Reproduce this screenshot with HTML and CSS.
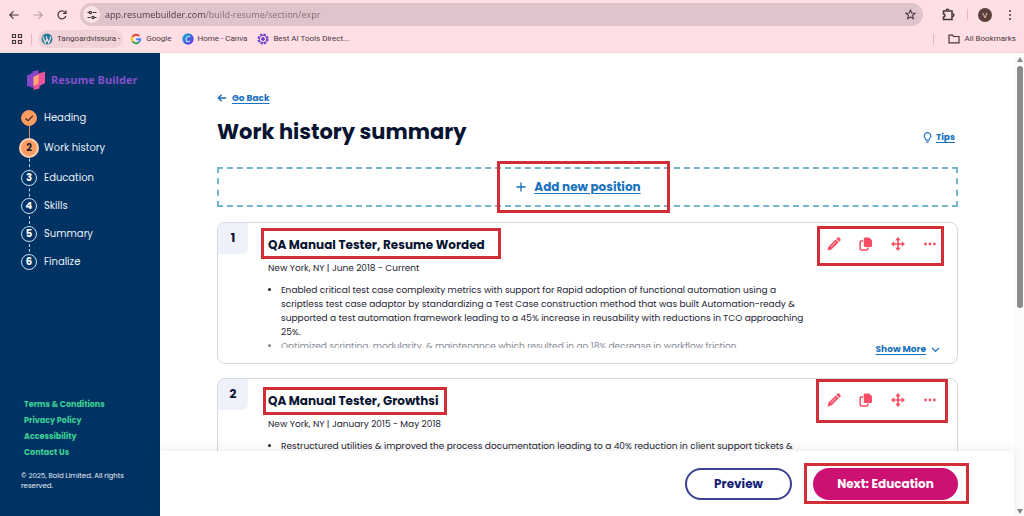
FILE: index.html
```html
<!DOCTYPE html>
<html lang="en">
<head>
<meta charset="utf-8">
<meta name="viewport" content="width=device-width, initial-scale=1">
<title>Work history summary</title>
<link rel="stylesheet" href="styles.css">
</head>
<body>
<svg class="defs" aria-hidden="true">
  <symbol id="pencil" viewBox="0 0 14 14"><path d="M9.3 1.8 10.5.6q.8-.7 1.6 0l1.3 1.3q.7.8 0 1.6l-1.2 1.2zM8.7 2.400l2.900 2.900-7.200 7.200L.5 13.500l1-3.900z" fill="currentColor"/><path d="M3.700 10 8.700 5" stroke="#fff" stroke-width=".7"/></symbol>
  <symbol id="copy" viewBox="0 0 14 14"><path d="M6 .5h4.200L13 3.200v5.600q0 1.200-1.200 1.200H6q-1.200 0-1.200-1.200V1.700Q4.800.5 6 .5z" fill="currentColor"/><path d="M4.200 4H2.200q-1 0-1 1v7q0 1 1 1h5.600q1 0 1-1v-1.500" fill="none" stroke="currentColor" stroke-width="1.500"/></symbol>
  <symbol id="move" viewBox="0 0 14 14"><path d="M7 1.500v11M1.500 7h11" stroke="currentColor" stroke-width="1.700"/><path d="M7 0l2.700 3.200H4.300zM7 14l2.700-3.200H4.300zM0 7l3.200-2.700v5.400zM14 7l-3.200-2.700v5.400z" fill="currentColor"/></symbol>
  <symbol id="dots" viewBox="0 0 14 14"><circle cx="2.600" cy="7" r="1.400" fill="currentColor"/><circle cx="7" cy="7" r="1.400" fill="currentColor"/><circle cx="11.400" cy="7" r="1.400" fill="currentColor"/></symbol>
</svg>

<header class="browser">
  <div class="toolbar">
    <button class="tool" aria-label="Back"><svg viewBox="0 0 12 12"><path d="M10.500 6H2M5.500 2.300 1.800 6l3.700 3.700" class="line"/></svg></button>
    <button class="tool tool-off" aria-label="Forward"><svg viewBox="0 0 12 12"><path d="M1.500 6H10M6.500 2.300 10.200 6 6.500 9.700" class="line"/></svg></button>
    <button class="tool" aria-label="Reload"><svg viewBox="0 0 12 12"><path d="M9.800 7A4 4 0 1 1 9 3.300l1 1M10 1.500v3H7" class="line"/></svg></button>
    <div class="address">
      <button class="site" aria-label="Site information"><svg viewBox="0 0 12 12"><path d="M1.500 3.500h2M7.500 8.500h3M6.500 3.500h4M1.500 8.500h3" class="line"/><circle cx="4.300" cy="3.500" r="1.200" class="line"/><circle cx="7" cy="8.500" r="1.200" class="line"/></svg></button>
      <input class="url" type="text" aria-label="Address" value="app.resumebuilder.com/build-resume/section/expr">
      <button class="star" aria-label="Bookmark this page"><svg viewBox="0 0 12 12"><path d="M6 1.200l1.400 3.200 3.500.3-2.600 2.300.8 3.500L6 8.700l-3.100 1.800.8-3.500L1.100 4.700l3.500-.3z" class="line"/></svg></button>
    </div>
    <button class="tool ext" aria-label="Extensions"><svg viewBox="0 0 13 13"><path d="M1.500 3h3q-.5-1.800 1-1.800t1 1.800H10v3q1.800-.5 1.800 1T10 8v3.500H1.500V9q1.500 0 1.500-1.500T1.500 6z" class="line heavy"/></svg></button>
    <span class="bar"></span>
    <button class="avatar" aria-label="Profile V">V</button>
    <button class="tool kebab" aria-label="Menu"><svg viewBox="0 0 12 12"><circle cx="6" cy="2" r="1"/><circle cx="6" cy="6" r="1"/><circle cx="6" cy="10" r="1"/></svg></button>
  </div>
  <nav class="bookmarks" aria-label="Bookmarks">
    <button class="apps" aria-label="Apps"><svg viewBox="0 0 12 12"><path d="M1.500 1.500h3v3h-3zM7.500 1.500h3v3h-3zM1.500 7.500h3v3h-3zM7.500 7.500h3v3h-3z" class="line"/></svg></button>
    <span class="bar"></span>
    <a href="#" class="mark mark-on"><svg viewBox="0 0 12 12"><circle cx="6" cy="6" r="5.500" fill="#2a7b9b"/><path d="M1.800 3.500 4.300 10 6 5.500 7.700 10 10 3.500M5 3.500 6 5.500" fill="none" stroke="#f5e6ea" stroke-width="1.100"/></svg>Tangoardvissura -</a>
    <a href="#" class="mark"><svg viewBox="0 0 12 12" fill="none" stroke-width="2"><path d="M9.300 3.200A4.200 4.200 0 0 0 2.500 3.700" stroke="#ea4335"/><path d="M2.500 3.700a4.200 4.200 0 0 0 0 4.600" stroke="#fbbc05"/><path d="M2.500 8.300a4.200 4.200 0 0 0 6.300 1" stroke="#34a853"/><path d="M8.800 9.300A4.200 4.200 0 0 0 10.200 6.200H6.200" stroke="#4285f4"/></svg>Google</a>
    <a href="#" class="mark"><svg viewBox="0 0 12 12"><defs><linearGradient id="cv" x2="1" y2="1"><stop stop-color="#18bfd0"/><stop offset=".55" stop-color="#3a62e0"/><stop offset="1" stop-color="#7d2ae8"/></linearGradient></defs><circle cx="6" cy="6" r="5.700" fill="url(#cv)"/><path d="M8 4.200Q7.500 3 6.200 3.300 4 4 4 6.500t2 2.300Q7.300 8.800 8.200 7.500" fill="none" stroke="#fff" stroke-width="1"/></svg>Home - Canva</a>
    <a href="#" class="mark"><svg viewBox="0 0 12 12" fill="none" stroke="#6a3fd0"><circle cx="6" cy="6" r="4.700" stroke-width="1.800" stroke-dasharray="2.300 1.390"/><circle cx="6" cy="6" r="3.800"/><circle cx="6" cy="6" r="1.400" fill="#6a3fd0"/></svg>Best AI Tools Direct...</a>
    <span class="bar bar-end"></span>
    <a href="#" class="mark mark-all"><svg viewBox="0 0 12 12"><path d="M1 2.200h3.500l1.200 1.300H11v6.300H1z" class="line"/></svg>All Bookmarks</a>
  </nav>
</header>

<div class="app">
  <aside class="sidebar">
    <a href="#" class="brand">
      <svg viewBox="0 0 20 22"><path d="M1 6.500 6.500 4V2.500L12.500 1v13.500L7.500 17v2L1 17z" fill="#8a46c8"/><path d="M7.500 8l5-2.400V4.500L19 2.500V14l-5.500 3v2.500L7.500 21z" fill="#f0529c"/><path d="M7.500 8l5-2.400v9l-5 2.400z" fill="#ffa873"/></svg>
      Resume Builder
    </a>
    <ol class="steps">
      <li class="step done"><span class="dot"><svg viewBox="0 0 12 12"><path d="M2.500 6.500 5 8.700 9.800 3.800" fill="none" stroke="#3a2a2a" stroke-width="1.200"/></svg></span><a href="#">Heading</a></li>
      <li class="step current"><span class="dot">2</span><a href="#">Work history</a></li>
      <li class="step"><span class="dot">3</span><a href="#">Education</a></li>
      <li class="step"><span class="dot">4</span><a href="#">Skills</a></li>
      <li class="step"><span class="dot">5</span><a href="#">Summary</a></li>
      <li class="step"><span class="dot">6</span><a href="#">Finalize</a></li>
    </ol>
    <nav class="legal" aria-label="Legal">
      <a href="#">Terms &amp; Conditions</a>
      <a href="#">Privacy Policy</a>
      <a href="#">Accessibility</a>
      <a href="#">Contact Us</a>
    </nav>
    <p class="copyright">© 2025, Bold Limited. All rights reserved.</p>
  </aside>

  <div class="page">
    <main class="content">
      <a href="#" class="back"><svg viewBox="0 0 12 12"><path d="M11 6H1.500M5.500 2 1.500 6l4 4" class="line heavy"/></svg><span>Go Back</span></a>
      <div class="heading">
        <h1>Work history summary</h1>
        <a href="#" class="tips"><svg viewBox="0 0 12 12"><path d="M4.500 9Q4.500 7.800 3.400 6.700a3.500 3.500 0 1 1 5.200 0Q7.500 7.800 7.500 9zM4.700 11h2.600" class="line"/></svg><span>Tips</span></a>
      </div>
      <div class="add">
        <button class="add-button"><svg viewBox="0 0 12 12"><path d="M6 .5v11M.5 6h11" class="line heavy"/></svg><span>Add new position</span><i class="callout callout-add"></i></button>
      </div>

      <article class="card">
        <span class="number">1</span>
        <div class="body">
          <h2>QA Manual Tester, Resume Worded<i class="callout callout-title"></i></h2>
          <p class="meta">New York, NY | June 2018 - Current</p>
          <ul class="duties">
            <li>Enabled critical test case complexity metrics with support for Rapid adoption of functional automation using a<br>scriptless test case adaptor by standardizing a Test Case construction method that was built Automation-ready &amp;<br>supported a test automation framework leading to a 45% increase in reusability with reductions in TCO approaching<br>25%.</li>
            <li class="faded">Optimized scripting, modularity, &amp; maintenance which resulted in an 18% decrease in workflow friction.</li>
          </ul>
        </div>
        <div class="side">
          <div class="actions">
            <button aria-label="Edit"><svg><use href="#pencil"/></svg></button>
            <button aria-label="Duplicate"><svg><use href="#copy"/></svg></button>
            <button aria-label="Move"><svg><use href="#move"/></svg></button>
            <button aria-label="More"><svg><use href="#dots"/></svg></button>
            <i class="callout callout-actions"></i>
          </div>
          <button class="more"><span>Show More</span><svg viewBox="0 0 12 12"><path d="M1.500 4 6 8.500 10.500 4" class="line heavy"/></svg></button>
        </div>
      </article>

      <article class="card">
        <span class="number">2</span>
        <div class="body">
          <h2>QA Manual Tester, Growthsi<i class="callout callout-title-short"></i></h2>
          <p class="meta">New York, NY | January 2015 - May 2018</p>
          <ul class="duties">
            <li>Restructured utilities &amp; improved the process documentation leading to a 40% reduction in client support tickets &amp;</li>
          </ul>
        </div>
        <div class="side">
          <div class="actions">
            <button aria-label="Edit"><svg><use href="#pencil"/></svg></button>
            <button aria-label="Duplicate"><svg><use href="#copy"/></svg></button>
            <button aria-label="Move"><svg><use href="#move"/></svg></button>
            <button aria-label="More"><svg><use href="#dots"/></svg></button>
            <i class="callout callout-actions-wide"></i>
          </div>
        </div>
      </article>
    </main>
    <footer class="footer">
      <button class="pill preview">Preview</button>
      <button class="pill next">Next: Education<i class="callout callout-next"></i></button>
    </footer>
  </div>

  <div class="scroll" aria-hidden="true"><span class="up"></span><span class="thumb"></span><span class="down"></span></div>
</div>
</body>
</html>
```
FILE: styles.css
```css
* { box-sizing: border-box; }
body {
  margin: 0;
  height: 100vh;
  display: flex;
  flex-direction: column;
  overflow: hidden;
  background: #fff;
  color: #1d2333;
  font: 10px/14px Poppins, Inter, sans-serif;
}
h1, h2, p, ol, ul { margin: 0; padding: 0; }
button, input { font: inherit; color: inherit; background: none; border: 0; padding: 0; }
button { cursor: pointer; }
a { color: inherit; text-decoration: none; }
svg { display: block; flex: none; width: 12px; height: 12px; }
.defs { position: absolute; width: 0; height: 0; }
.line { fill: none; stroke: currentColor; stroke-width: 1.2; }
.heavy { stroke-width: 1.6; }

/* Browser bars */
.browser {
  flex: none;
  padding: 3px 8px 0;
  background: #ffdee5;
  border-bottom: 1px solid #f0d3da;
  color: #46393d;
  font: 9px/12px "Open Sans", sans-serif;
}
.toolbar { display: flex; align-items: center; height: 23px; gap: 12px; }
.tool-off { color: #bd9fa6; }
.address {
  flex: 1;
  display: flex;
  align-items: center;
  height: 23px;
  margin-right: 7px;
  padding: 0 3px;
  border-radius: 12px;
  background: #e0c4cb;
}
.site {
  display: grid;
  place-items: center;
  width: 17px;
  height: 17px;
  border-radius: 50%;
  background: #fbe3e8;
}
.url {
  flex: 1;
  min-width: 0;
  margin-left: 5px;
  background: linear-gradient(90deg, #46393d 101px, #80696f 101px);
  background-clip: text;
  -webkit-background-clip: text;
  color: transparent;
  outline: 0;
}
.star { padding-right: 4px; }
.star svg { width: 11px; height: 11px; }
.ext svg { width: 13px; height: 13px; }
.bar { width: 1px; height: 11px; background: #f2afbd; }
.toolbar .bar { margin-right: -2px; }
.avatar {
  width: 14px;
  height: 14px;
  border-radius: 50%;
  background: #5b4039;
  color: #f0dede;
  font-size: 8px;
  line-height: 14px;
}
.kebab { fill: currentColor; }
.bookmarks { display: flex; align-items: center; height: 26px; padding-left: 3px; gap: 4px; font: 8px/12px Roboto, sans-serif; }
.bookmarks .bar { margin: 0 2px 0 4px; }
.bookmarks .bar-end { margin: 0 6px 0 auto; }
.mark { display: flex; align-items: center; gap: 4px; padding: 0 3px; height: 18px; white-space: nowrap; }
.mark-on { border-radius: 9px; background: #f2d2d9; }
.mark-all { padding: 0 0 0 4px; }

.app { flex: 1; min-height: 0; display: flex; }

/* Sidebar */
.sidebar {
  flex: none;
  width: 160px;
  display: flex;
  flex-direction: column;
  padding: 16px 20px 25px;
  background: #003363;
  color: #e8eff7;
}
.brand {
  display: flex;
  align-items: center;
  gap: 5px;
  padding-left: 6px;
  color: #8450c8;
  font: bold 11px/22px "Open Sans", sans-serif;
  white-space: nowrap;
}
.brand svg { width: 20px; height: 22px; }
.steps { list-style: none; margin-top: 12px; }
.step { position: relative; display: flex; align-items: center; gap: 5px; height: 28px; }
.step:nth-child(-n+2) { height: 30px; }
.step:nth-child(3) { height: 29px; }
.step::after {
  content: "";
  position: absolute;
  left: 9px;
  top: 50%;
  height: 100%;
  border-left: 1px dashed #c5d6e6;
}
.step.done::after { border-left: 1px solid #c98e72; }
.step:last-child::after { display: none; }
.dot {
  z-index: 1;
  flex: none;
  display: grid;
  place-items: center;
  width: 16px;
  height: 16px;
  margin: 0 2px 0 1px;
  border: 1px solid #c6e0f2;
  border-radius: 50%;
  background: #003363;
  color: #fff;
  font-weight: 700;
}
.done .dot { background: #fc9c62; border-color: #fc9c62; }
.current .dot {
  width: 20px;
  height: 20px;
  margin: 0 0 0 -1px;
  border: 2px solid #fbd0b8;
  background: #fc9c62;
  color: #1b1b2b;
}
.legal {
  display: flex;
  flex-direction: column;
  margin-top: auto;
  padding-left: 4px;
  color: #3bcf93;
  font-weight: 700;
  font-size: 8px;
  line-height: 16px;
}
.copyright { margin-top: 10px; padding-left: 1px; font-size: 7px; line-height: 10px; }

/* Page */
.page { flex: 1; min-width: 0; display: flex; flex-direction: column; }
.content { flex: 1; min-height: 0; overflow: hidden; padding: 38px 56px 0 57px; }
.back, .tips, .more, .add-button { color: #1871bd; font-weight: 700; }
.back span, .tips span, .more span, .add-button span { text-decoration: underline; text-underline-offset: 2px; }
.back, .tips { display: flex; align-items: center; gap: 5px; font-size: 9px; }
.back svg { width: 10px; height: 10px; }
.tips svg { width: 11px; height: 11px; }
.heading { display: flex; align-items: center; justify-content: space-between; padding-right: 3px; margin: 12px 0 20px; }
h1 { color: #071431; font-size: 21px; line-height: 30px; font-weight: 700; }
.tips { padding-top: 10px; gap: 3px; }
.add {
  display: flex;
  justify-content: center;
  height: 40px;
  margin-bottom: 15px;
  border: 2px dashed #74b6cf;
}
.add-button { position: relative; display: flex; align-items: center; gap: 8px; padding-right: 18px; font-size: 12px; }
.add-button svg { width: 10px; height: 10px; }

.card {
  display: flex;
  gap: 20px;
  height: 142px;
  margin-bottom: 14px;
  border: 1px solid #d3d9e2;
  border-radius: 8px;
}
.number {
  flex: none;
  width: 30px;
  height: 31px;
  border-radius: 8px 0 6px 0;
  background: #eff1fa;
  color: #071431;
  font-weight: 700;
  font-size: 12px;
  line-height: 30px;
  text-align: center;
}
.body { flex: 1; min-width: 0; padding-top: 12px; }
h2 { position: relative; display: inline-block; color: #071431; font-size: 12px; line-height: 20px; font-weight: 700; }
.meta { margin-top: 6px; font-size: 9px; line-height: 14px; }
.duties { height: 65px; margin-top: 8px; padding-left: 13px; overflow: hidden; font-size: 9px; white-space: nowrap; }
.faded { color: #858b95; }
.side { display: flex; flex-direction: column; justify-content: space-between; align-items: flex-end; padding: 14px 17px 7px 0; }
.actions { position: relative; display: flex; gap: 18px; padding-right: 3px; color: #f34e62; }
.actions svg { width: 14px; height: 14px; }
.more { display: flex; align-items: center; gap: 5px; font-size: 9px; line-height: 14px; white-space: nowrap; }
.more svg { width: 9px; height: 9px; }

.footer {
  position: relative;
  flex: none;
  display: flex;
  align-items: center;
  justify-content: flex-end;
  gap: 21px;
  height: 65px;
  padding-right: 56px;
  background: #fff;
  box-shadow: 0 -2px 10px rgba(0, 0, 0, .08);
}
.pill { position: relative; height: 32px; border-radius: 16px; font-weight: 700; font-size: 12px; }
.preview { width: 107px; border: 2px solid #3a4192; color: #151c76; }
.next { width: 145px; background: #cd1173; color: #fff; }

/* Highlight frames */
.callout { position: absolute; border: 3px solid #d22e38; pointer-events: none; }
.callout-add { inset: -8px -11px -8px -19px; }
.callout-title { inset: -7px -16px -4px -7px; }
.callout-title-short { inset: -4px -8px -4px -5px; }
.callout-actions { inset: -11px -4px -15px -10px; }
.callout-actions-wide { inset: -14px -8px -16px -11px; }
.callout-next { inset: -5px -11px -4px -9px; }

/* Scrollbar */
.scroll { flex: none; display: flex; flex-direction: column; align-items: center; width: 10px; padding: 4px 0 2px 2px; background: #fcfcfc; }
.up, .down { border: 3px solid transparent; }
.up { border-top: 0; border-bottom: 5px solid #858585; }
.down { margin-top: auto; border-bottom: 0; border-top: 5px solid #858585; }
.thumb { width: 6px; height: 53%; margin-top: 4px; border-radius: 3px; background: #8b8b8b; }
```
